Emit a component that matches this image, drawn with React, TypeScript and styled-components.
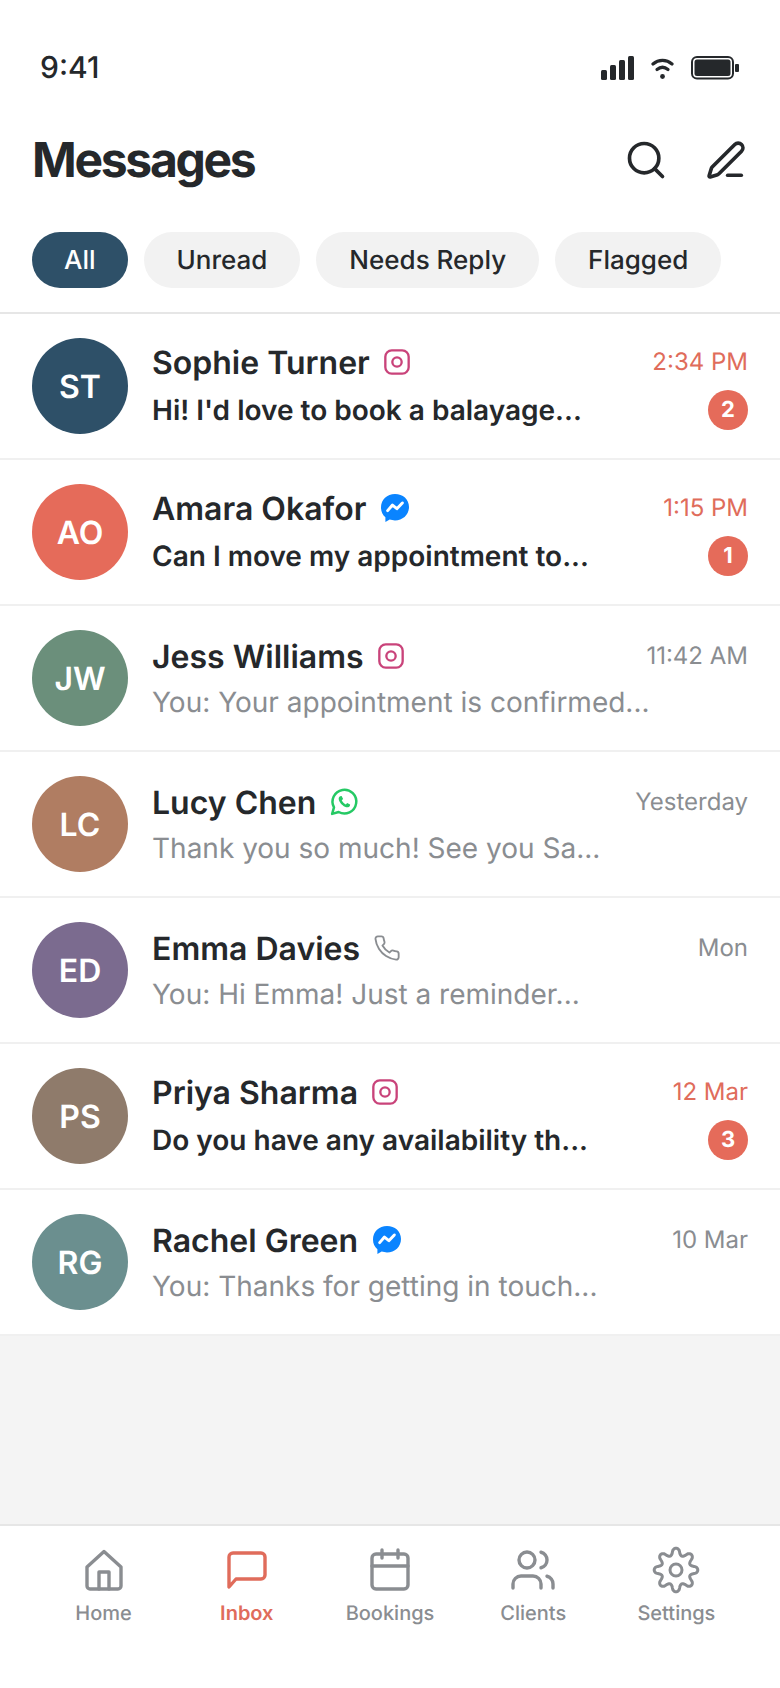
import React from 'react';
import styled, { createGlobalStyle } from 'styled-components';

const Global = createGlobalStyle`
  html, body { margin: 0; padding: 0; background: #fff; }
  * { box-sizing: border-box; }
  body { font-family: Inter, "Liberation Sans", sans-serif; font-optical-sizing: none; text-rendering: geometricPrecision; }
`;

const Screen = styled.div`
  width: 780px; height: 1688px; display: flex; flex-direction: column; background: #f4f4f4; color: #25282b; overflow: hidden;
`;
const Top = styled.div`background: #fff; border-bottom: 2px solid #e6e6e6;`;
const StatusBar = styled.div`
  height: 104px; padding: 47px 41px 0 40px; display: flex; justify-content: space-between; align-items: flex-start;
`;
const Clock = styled.div`font-size: 30px; font-weight: 500; line-height: 42px;`;
const StatusIcons = styled.div`display: flex; align-items: center; gap: 17px; margin-top: 9px;`;
const Header = styled.div`
  height: 112px; padding: 0 32px; display: flex; justify-content: space-between; align-items: center;
`;
const Title = styled.h1`margin: 0; font-size: 48px; line-height: 56px; font-weight: 700; letter-spacing: -2.3px;`;
const HeaderIcons = styled.div`display: flex; gap: 36px; align-items: center;`;
const Filters = styled.div`display: flex; gap: 16px; padding: 16px 32px 24px;`;
const Pill = styled.div<{ $active?: boolean }>`
  height: 56px; padding: 1px ${p => (p.$active ? 32 : 33)}px 0; border-radius: 28px; display: flex; align-items: center; font-size: 26px; font-weight: 500;
  background: ${p => (p.$active ? '#2e5068' : '#f2f2f2')}; color: ${p => (p.$active ? '#fff' : '#25282b')};
`;
const List = styled.div`background: #fff; display: flex; flex-direction: column;`;
const Row = styled.div`
  height: 146px; padding: 0 32px; display: flex; align-items: center; gap: 24px; border-bottom: 2px solid #f0f0f0;
`;
const Avatar = styled.div<{ $bg: string }>`
  width: 96px; height: 96px; border-radius: 50%; flex: none; display: flex; align-items: center; justify-content: center;
  background: ${p => p.$bg}; color: #fff; font-size: 32px; font-weight: 600;
`;
const Body = styled.div`flex: 1; min-width: 0; display: flex; flex-direction: column; gap: 8px;`;
const Line = styled.div`display: flex; justify-content: space-between; align-items: center;`;
const NameWrap = styled.div`display: flex; align-items: center; gap: 13px;`;
const Name = styled.span`font-size: 32px; font-weight: 600; line-height: 38px; padding-top: 2px;`;
const Time = styled.span<{ $hot?: boolean }>`font-size: 24px; color: ${p => (p.$hot ? '#e06c5b' : '#8a8d91')}; line-height: 32px;`;
const Preview = styled.span<{ $unread?: boolean }>`
  font-size: 28px; line-height: 36px; white-space: nowrap;
  font-weight: ${p => (p.$unread ? 600 : 400)}; color: ${p => (p.$unread ? '#25282b' : '#8a8d91')};
`;
const Badge = styled.div`
  width: 40px; height: 40px; border-radius: 50%; background: #e56b5a; color: #fff; font-size: 22px; font-weight: 700;
  display: flex; align-items: center; justify-content: center;
`;
const Fill = styled.div`flex: 1;`;
const Nav = styled.div`
  height: 164px; background: #fff; border-top: 2px solid #e6e6e6; padding: 20px 32px 0; display: flex;
`;
const NavItem = styled.div<{ $active?: boolean }>`
  flex: 1; display: flex; flex-direction: column; align-items: center; height: 88px; gap: 5px; font-size: 20px; line-height: 28px;
  font-weight: ${p => (p.$active ? 600 : 500)}; color: ${p => (p.$active ? '#e06c5b' : '#8a8d91')};
`;

const Svg = ({ size, color, width = 2, box = '0 0 24 24', children }: { size: number; color: string; width?: number; box?: string; children: React.ReactNode }) => (
  <svg width={size} height={size} viewBox={box} fill="none" stroke={color} strokeWidth={width} strokeLinecap="round" strokeLinejoin="round">{children}</svg>
);
const Instagram = () => (
  <Svg size={28} color="#c9437a"><rect x="2" y="2" width="20" height="20" rx="5.5" /><circle cx="12" cy="12" r="4" /></Svg>
);
const Messenger = () => (
  <svg width="32" height="32" viewBox="0 0 24 24"><path fill="#0a84ff" d="M12 1.500C6.100 1.500 1.500 5.800 1.500 11.600c0 3 1.200 5.600 3.300 7.400v3.500l3.200-1.800c1.200.4 2.600.6 4 .6 5.900 0 10.500-4.300 10.500-10.100S17.900 1.500 12 1.500z" /><path fill="none" stroke="#fff" strokeWidth="2.200" strokeLinecap="round" strokeLinejoin="round" d="M6.500 14l3.600-4.200 3.300 2.700 4.100-4.300" /></svg>
);
const WhatsApp = () => (
  <svg width="30" height="30" viewBox="0 0 24 24"><path fill="none" stroke="#25c964" strokeWidth="2" strokeLinejoin="round" d="M2.500 21.500l1.500-5.200A9.500 9.500 0 1 1 7.700 20l-5.200 1.500z" /><path fill="#25c964" d="M8.800 7.300c-.9.600-1.300 1.700-.9 3 .8 2.500 3.300 5 5.800 5.800 1.300.4 2.400 0 3-.9l.2-1.200-2.400-1.200-1 1.100c-1.300-.5-2.800-2-3.300-3.300l1.100-1-1.200-2.400-1.300.1z" /></svg>
);
const Phone = () => (
  <Svg size={28} color="#8a8d91" width={1.6}><path d="M22 16.920v3a2 2 0 0 1-2.180 2 19.790 19.790 0 0 1-8.630-3.070 19.500 19.500 0 0 1-6-6 19.790 19.790 0 0 1-3.070-8.670A2 2 0 0 1 4.110 2h3a2 2 0 0 1 2 1.720c.13.960.36 1.900.7 2.810a2 2 0 0 1-.45 2.110L8.090 9.910a16 16 0 0 0 6 6l1.270-1.270a2 2 0 0 1 2.110-.45c.91.340 1.850.57 2.810.7A2 2 0 0 1 22 16.920z" /></Svg>
);

const gearPath = (() => {
  const pts: string[] = [];
  const n = 160;
  for (let k = 0; k < n; k++) {
    const th = (k / n) * Math.PI * 2;
    const c = Math.cos(8 * th);
    const s = Math.sign(c) * Math.pow(Math.abs(c), 0.65);
    const r = 9.2 + 1.7 * s;
    pts.push(`${(12 + r * Math.sin(th)).toFixed(2)} ${(12 - r * Math.cos(th)).toFixed(2)}`);
  }
  return `M${pts.join('L')}Z`;
})();

const rows = [
  { i: 'ST', bg: '#2e5068', n: 'Sophie Turner', c: <Instagram />, t: '2:34 PM', p: "Hi! I'd love to book a balayage...", b: 2 },
  { i: 'AO', bg: '#e56b5a', n: 'Amara Okafor', c: <Messenger />, t: '1:15 PM', p: 'Can I move my appointment to...', b: 1 },
  { i: 'JW', bg: '#6b8f7b', n: 'Jess Williams', c: <Instagram />, t: '11:42 AM', p: 'You: Your appointment is confirmed...' },
  { i: 'LC', bg: '#b07d62', n: 'Lucy Chen', c: <WhatsApp />, t: 'Yesterday', p: 'Thank you so much! See you Sa...' },
  { i: 'ED', bg: '#7b6b8f', n: 'Emma Davies', c: <Phone />, t: 'Mon', p: 'You: Hi Emma! Just a reminder...' },
  { i: 'PS', bg: '#8f7b6b', n: 'Priya Sharma', c: <Instagram />, t: '12 Mar', p: 'Do you have any availability th...', b: 3 },
  { i: 'RG', bg: '#6b8f8f', n: 'Rachel Green', c: <Messenger />, t: '10 Mar', p: 'You: Thanks for getting in touch...' },
];

export default function App() {
  const g = '#8a8d91';
  return (
    <Screen>
      <Global />
      <Top>
        <StatusBar>
          <Clock>9:41</Clock>
          <StatusIcons>
            <svg width="33" height="24" viewBox="0 0 33 24" fill="#25282b"><rect x="0" y="14" width="6" height="10" rx="1.500" /><rect x="9" y="9" width="6" height="15" rx="1.500" /><rect x="18" y="4" width="6" height="20" rx="1.500" /><rect x="27" y="0" width="6" height="24" rx="1.500" /></svg>
            <svg width="23" height="24" viewBox="0 0 23 24" fill="none" stroke="#25282b" strokeWidth="3.200" strokeLinecap="round"><path d="M2 8c5.600-4.800 13.400-4.800 19 0" /><path d="M6 13.500c3.400-2.800 7.600-2.800 11 0" /><circle cx="11.500" cy="20.500" r="2.400" fill="#25282b" stroke="none" /></svg>
            <svg width="48" height="24" viewBox="0 0 48 24"><rect x="1" y="1" width="41" height="21.500" rx="5" fill="none" stroke="#25282b" strokeWidth="2" /><rect x="3.500" y="3.500" width="36" height="16.500" rx="2.500" fill="#25282b" /><rect x="44" y="8" width="4" height="8" rx="1" fill="#25282b" /></svg>
          </StatusIcons>
        </StatusBar>
        <Header>
          <Title>Messages</Title>
          <HeaderIcons>
            <Svg size={44} color="#25282b"><circle cx="11" cy="11" r="8" /><path d="M21 21l-4.300-4.300" /></Svg>
            <Svg size={44} color="#25282b" width={2.170} box="-1 -1 26 26"><path d="M13 21h8" /><path d="M21.174 6.812a1 1 0 0 0-3.986-3.987L3.842 16.174a2 2 0 0 0-.5.83l-1.321 4.352a.5.5 0 0 0 .623.622l4.353-1.320a2 2 0 0 0 .83-.497z" /></Svg>
          </HeaderIcons>
        </Header>
        <Filters>
          <Pill $active>All</Pill>
          <Pill>Unread</Pill>
          <Pill>Needs Reply</Pill>
          <Pill>Flagged</Pill>
        </Filters>
      </Top>
      <List>
        {rows.map(r => (
          <Row key={r.i}>
            <Avatar $bg={r.bg}>{r.i}</Avatar>
            <Body>
              <Line>
                <NameWrap><Name>{r.n}</Name>{r.c}</NameWrap>
                <Time $hot={!!r.b}>{r.t}</Time>
              </Line>
              <Line>
                <Preview $unread={!!r.b}>{r.p}</Preview>
                {r.b ? <Badge>{r.b}</Badge> : null}
              </Line>
            </Body>
          </Row>
        ))}
      </List>
      <Fill />
      <Nav>
        <NavItem>
          <Svg size={48} color={g} width={1.700}><path d="M3.500 10.500 12 2.800l8.500 7.700V20a1.500 1.500 0 0 1-1.500 1.500H5A1.500 1.500 0 0 1 3.500 20z" /><path d="M9.500 21.500V13h5v8.500" /></Svg>
          Home
        </NavItem>
        <NavItem $active>
          <Svg size={48} color="#e06c5b" width={1.700}><path d="M21 14.500a2 2 0 0 1-2 2H6.500L3 20.500V5.500a2 2 0 0 1 2-2h14a2 2 0 0 1 2 2z" /></Svg>
          Inbox
        </NavItem>
        <NavItem>
          <Svg size={48} color={g} width={1.700}><rect x="3" y="4" width="18" height="17.500" rx="2" /><path d="M16 2v4M8 2v4M3 10h18" /></Svg>
          Bookings
        </NavItem>
        <NavItem>
          <Svg size={48} color={g} width={1.700}><path d="M16 21v-2a4 4 0 0 0-4-4H6a4 4 0 0 0-4 4v2" /><circle cx="9" cy="7" r="4" /><path d="M22 21v-2a4 4 0 0 0-3-3.870" /><path d="M16 3.130a4 4 0 0 1 0 7.750" /></Svg>
          Clients
        </NavItem>
        <NavItem>
          <Svg size={48} color={g} width={1.500}><path d={gearPath} /><circle cx="12" cy="12" r="3" /></Svg>
          Settings
        </NavItem>
      </Nav>
    </Screen>
  );
}
